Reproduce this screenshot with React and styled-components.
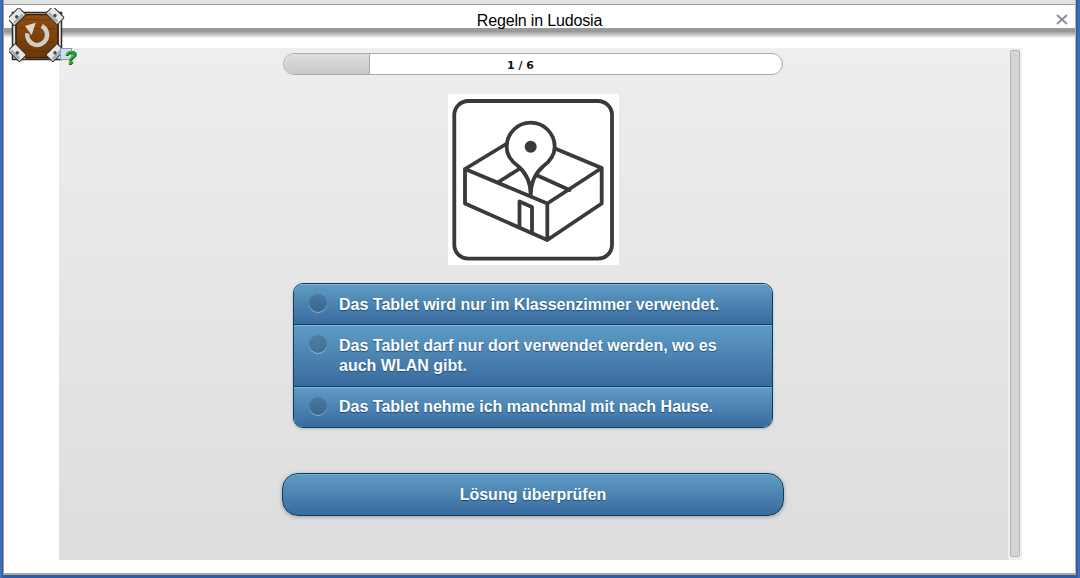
import React from "react";
import styled, { createGlobalStyle } from "styled-components";

const Global = createGlobalStyle`
  html, body { margin: 0; padding: 0; background: #3c69b4; }
  * { box-sizing: border-box; }
`;

const Frame = styled.div`
  position: relative;
  width: 1080px;
  height: 578px;
  overflow: hidden;
  padding: 0 4px 3px 3px;
  background: linear-gradient(90deg, #4a76bd 0, #2f5aa6 3px, #2f5aa6 1077px, #3f6db8 1078px);
  font-family: "Liberation Sans", Arial, sans-serif;
`;

const Inner = styled.div`
  height: 100%;
  display: flex;
  flex-direction: column;
  background: #fff;
  border-left: 1px solid #9a9a9a;
  border-right: 1px solid #b5b5b5;
  border-bottom: 2px solid #a8a8a8;
`;

const TopStrip = styled.div`
  height: 5px;
  flex: none;
  background: #e2e2e2;
  border-bottom: 1px solid #999;
`;

const TitleBar = styled.header`
  height: 23px;
  flex: none;
  position: relative;
  display: flex;
  align-items: center;
  justify-content: center;
  padding-top: 9px;
  font-size: 16px;
  letter-spacing: -0.16px;
  color: #000;
  background: #fff;
`;

const Close = styled.svg`
  position: absolute;
  right: 7px;
  top: 9px;
  width: 12px;
  height: 11px;
`;

const TitleShadow = styled.div`
  height: 10px;
  flex: none;
  background: linear-gradient(180deg, #999 0, #999 35%, #c8c8c8 70%, #fff 100%);
`;

const Main = styled.main`
  flex: none;
  display: flex;
  align-items: flex-start;
  padding: 10px 0 0 55px;
`;

const Panel = styled.section`
  width: 949px;
  height: 512px;
  display: flex;
  flex-direction: column;
  align-items: center;
  padding: 5px 1px 0 0;
  background: linear-gradient(180deg, #eee, #ddd);
`;

const ScrollTrack = styled.div`
  width: 14px;
  height: 512px;
  padding: 2px 2px 3px;
  background: #efefef;
`;

const ScrollThumb = styled.div`
  height: 100%;
  background: #d5d5d5;
  border: 1px solid #b4b4b4;
  border-radius: 2px;
`;

const Progress = styled.div`
  position: relative;
  width: 500px;
  height: 22px;
  flex: none;
  overflow: hidden;
  background: #fff;
  border: 1px solid #aaa;
  border-radius: 11px;
  display: flex;
  align-items: center;
  justify-content: center;
  padding: 2px 25px 0 0;
`;

const ProgressValue = styled.div`
  position: absolute;
  left: 0;
  top: 0;
  bottom: 0;
  background: linear-gradient(180deg, #ddd, #c9c9c9);
  border-right: 1px solid #aaa;
`;

const ProgressLabel = styled.span`
  position: relative;
  font: bold 11px "DejaVu Sans", Verdana, sans-serif;
  color: #111;
`;

const Picture = styled.svg`
  width: 171px;
  height: 171px;
  flex: none;
  display: block;
  margin: 19px 0 0 1px;
  background: #fff;
`;

const Options = styled.div`
  width: 480px;
  margin-top: 18px;
  flex: none;
  overflow: hidden;
  border: 1px solid #044062;
  border-radius: 10px;
  box-shadow: 0 1px 3px rgba(0, 0, 0, 0.2);
`;

const Option = styled.label`
  display: flex;
  align-items: flex-start;
  padding: 10.5px 40px 9.83px 45px;
  position: relative;
  font-size: 16px;
  font-weight: bold;
  line-height: 20px;
  color: #fff;
  text-shadow: 0 1px 1px #194b7e;
  background: linear-gradient(180deg, #5f9cc5, #396b9e);
  box-shadow: inset 0 1px 0 rgba(255, 255, 255, 0.25);
  & + & { border-top: 1px solid #044062; }
`;

const Radio = styled.span`
  position: absolute;
  left: 15px;
  top: 10px;
  width: 18px;
  height: 18px;
  border-radius: 50%;
  background: rgba(0, 0, 0, 0.15);
  box-shadow: 0 1px 0 rgba(255, 255, 255, 0.4);
`;

const Submit = styled.button`
  width: 502px;
  height: 43px;
  margin-top: 45px;
  flex: none;
  padding: 2px 0 0;
  border: 1px solid #044062;
  border-radius: 16px;
  font: bold 16px "Liberation Sans", Arial, sans-serif;
  color: #fff;
  text-shadow: 0 1px 1px #194b7e;
  background: linear-gradient(180deg, #5f9cc5, #396b9e);
  box-shadow: 0 1px 4px rgba(0, 0, 0, 0.3), inset 0 1px 0 rgba(255, 255, 255, 0.2);
`;

const Badge = styled.svg`
  position: absolute;
  left: 9px;
  top: 8px;
  width: 56px;
  height: 54px;
`;

const HelpDoc = styled.div`
  position: absolute;
  left: 60px;
  top: 48px;
  width: 12px;
  height: 12px;
  background: #cfdff0;
  border: 1px solid #7d9fc8;
`;

const HelpMark = styled.span`
  position: absolute;
  left: 65px;
  top: 47px;
  font: bold 19px/22px "Liberation Sans", Arial, sans-serif;
  color: #2aa82a;
  text-shadow: 1px 0 0 #0a5a0a, 0 1px 0 #0a5a0a;
`;

const PICTURE_INK = "#3a3a3a";

function RoomIcon() {
  return (
    <Picture viewBox="0 0 171 171" fill="none" stroke={PICTURE_INK} strokeWidth="3.8" strokeLinejoin="round" strokeLinecap="round">
      <rect x="6.3" y="7" width="157.7" height="157.7" rx="14" />
      <path d="M17 75 L59 49.5 M107 54.5 L153.7 74 L153.7 109.5 L99.3 146 L17 109.5 L17 75 L99.3 109.5 L153.7 74 M99.3 109.5 V146" />
      <path d="M50.5 88 L72 74.5 M90.5 82 L121.5 96" />
      <path d="M71.5 132 V107.5 L84 113 V137.5" />
      <path d="M82.7 101 C82.7 88 78 79 70.5 72.5 C62 66.5 58.7 60 58.7 52.7 A24 24 0 0 1 106.7 52.7 C106.7 60 103 66.5 95 72.5 C87.5 79 82.7 88 82.7 101 Z" />
      <circle cx="82.7" cy="52.7" r="6" fill={PICTURE_INK} stroke="none" />
    </Picture>
  );
}

function Stud({ x, y, r }) {
  return (
    <g transform={`translate(${x} ${y}) rotate(${r})`}>
      <rect x="-8" y="-5" width="16" height="10" rx="1" fill="#e6e8e6" stroke="#2f2f2f" strokeWidth="1" />
      <rect x="-6" y="1.5" width="12" height="2.5" fill="#a9abab" />
      <circle r="1.7" fill="#4a4a4a" />
    </g>
  );
}

function ReloadBadge() {
  return (
    <Badge viewBox="0 0 56 54">
      <defs>
        <linearGradient id="wood" x1="0" y1="0" x2="0" y2="1">
          <stop offset="0" stopColor="#8f4e12" />
          <stop offset="1" stopColor="#6e3705" />
        </linearGradient>
      </defs>
      <rect x="3.5" y="4.5" width="49" height="47" fill="#e4e4e4" stroke="#2b2b2b" strokeWidth="1.5" />
      <rect x="6" y="7" width="44" height="42" fill="#8f8f8f" />
      <path d="M17 6.5 H39 L49 16.5 V40 L39 50 H17 L7 40 V16.5 Z" fill="url(#wood)" stroke="#3a1d04" strokeWidth="1.5" />
      <path d="M10 20 C22 17 32 24 46 20 M10 34 C22 31 34 38 46 33 M14 12 C24 10 32 14 42 11 M14 43 C24 41 32 46 42 42" fill="none" stroke="#5a2c05" strokeWidth="1" opacity="0.6" />
      <path d="M32.7 18 A10 10 0 1 1 18.3 25.3" fill="none" stroke="#cfcfc9" strokeWidth="4.5" />
      <path d="M26.7 14.7 L16 18 L22.7 27 Z" fill="#dadad4" />
      <Stud x="7.7" y="8.7" r="-45" />
      <Stud x="46" y="7.5" r="45" />
      <Stud x="8.3" y="44.7" r="45" />
      <Stud x="46" y="44.7" r="-45" />
    </Badge>
  );
}

const OPTIONS = [
  "Das Tablet wird nur im Klassenzimmer verwendet.",
  "Das Tablet darf nur dort verwendet werden, wo es auch WLAN gibt.",
  "Das Tablet nehme ich manchmal mit nach Hause.",
];

export default function App() {
  return (
    <Frame>
      <Global />
      <Inner>
        <TopStrip />
        <TitleBar>
          Regeln in Ludosia
          <Close viewBox="0 0 12 11" fill="none" stroke="#8b8ea6" strokeWidth="2">
            <path d="M1 1 L11 10 M11 1 L1 10" />
          </Close>
        </TitleBar>
        <TitleShadow />
        <Main>
          <Panel>
            <Progress>
              <ProgressValue style={{ width: `${(100 * 86) / 498}%` }} />
              <ProgressLabel>1 / 6</ProgressLabel>
            </Progress>
            <RoomIcon />
            <Options>
              {OPTIONS.map((text) => (
                <Option key={text}>
                  <Radio />
                  {text}
                </Option>
              ))}
            </Options>
            <Submit>Lösung überprüfen</Submit>
          </Panel>
          <ScrollTrack>
            <ScrollThumb />
          </ScrollTrack>
        </Main>
      </Inner>
      <ReloadBadge />
      <HelpDoc />
      <HelpMark>?</HelpMark>
    </Frame>
  );
}
